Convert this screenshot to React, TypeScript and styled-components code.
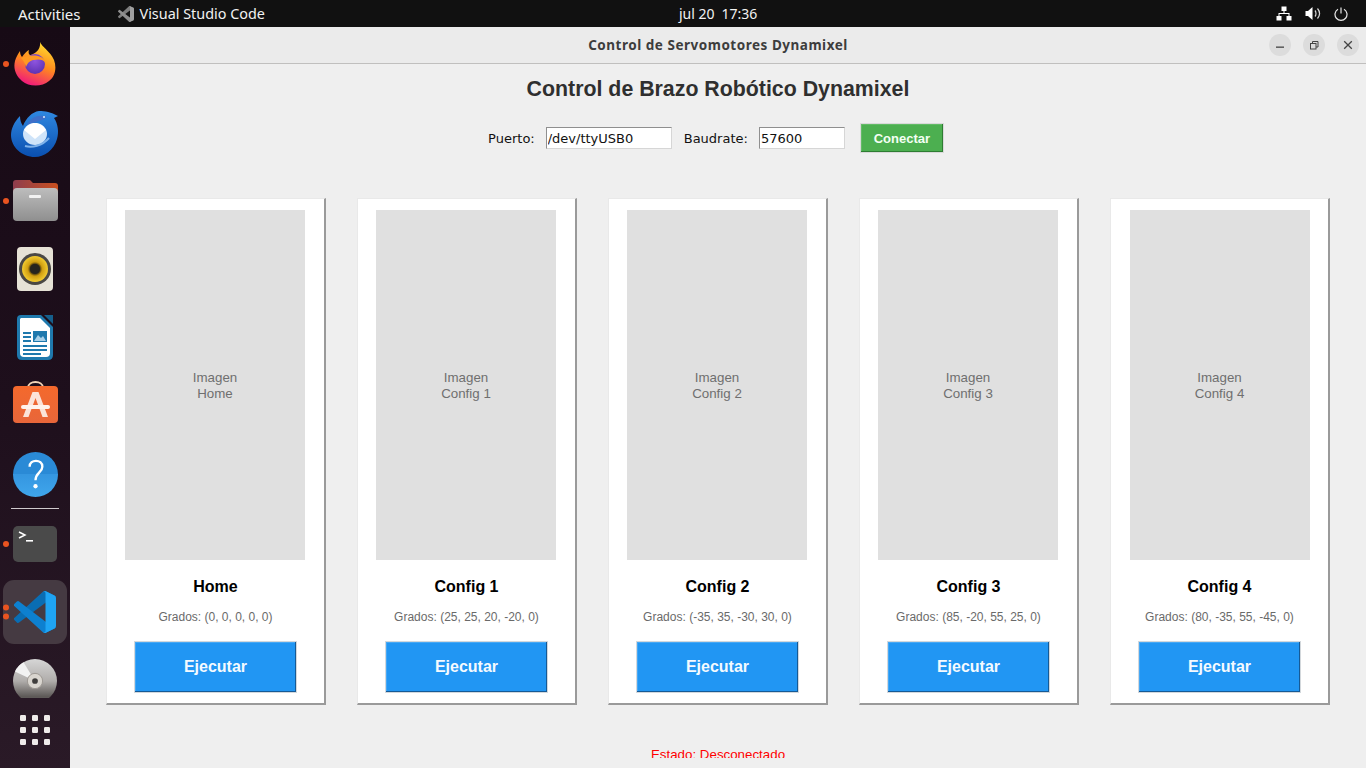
import styled, { createGlobalStyle } from "styled-components";

const GlobalStyle = createGlobalStyle`
	html, body {
		margin: 0;
		padding: 0;
		width: 1366px;
		height: 768px;
		overflow: hidden;
		background: #efefef;
	}
`;

const Screen = styled.div`
	width: 1366px;
	height: 768px;
	display: flex;
	flex-direction: column;
	overflow: hidden;
	font-family: "Liberation Sans", Arial, sans-serif;
`;

const TopBar = styled.div`
	height: 27px;
	flex: none;
	background: #111111;
	color: #f2f2f2;
	display: grid;
	grid-template-columns: 679px auto 1fr;
	align-items: center;
	font-family: "Noto Sans", sans-serif;
	font-size: 15px;
`;

const TopLeft = styled.div`
	display: flex;
	align-items: center;
	padding-left: 18px;
`;

const AppName = styled.div`
	display: flex;
	align-items: center;
	gap: 6px;
	margin-left: 37px;
	font-size: 14.4px;
`;

const Clock = styled.div`
	display: flex;
	gap: 7px;
	font-size: 14px;
`;

const TrayIcons = styled.div`
	display: flex;
	justify-content: flex-end;
	align-items: center;
	gap: 13px;
	padding-right: 18px;
`;

const Body = styled.div`
	flex: 1;
	display: flex;
	min-height: 0;
`;

const Dock = styled.div`
	width: 70px;
	flex: none;
	background: linear-gradient(180deg, #170a15 0%, #1e0f1c 50%, #2a1a27 100%);
	display: flex;
	flex-direction: column;
	align-items: center;
	padding: 5px 0 6px;
	box-sizing: border-box;
`;

const DockList = styled.div`
	flex: 1;
	min-height: 0;
	overflow: hidden;
	display: flex;
	flex-direction: column;
	align-items: center;
`;

const DockSlot = styled.div<{ $active?: boolean }>`
	position: relative;
	flex: none;
	width: 64px;
	height: 64px;
	margin-bottom: 4.4px;
	border-radius: 11px;
	display: flex;
	align-items: center;
	justify-content: center;
	background: ${(p) => (p.$active ? "#453a42" : "transparent")};
`;

const ShowApps = styled.div`
	flex: none;
	width: 64px;
	height: 64px;
	display: flex;
	align-items: center;
	justify-content: center;
`;

const RunDots = styled.div`
	position: absolute;
	left: 0;
	top: 50%;
	transform: translateY(-50%);
	display: flex;
	flex-direction: column;
	gap: 3px;
`;

const RunDot = styled.span`
	display: block;
	width: 6px;
	height: 6px;
	border-radius: 50%;
	background: #e95420;
`;

const DockSeparator = styled.div`
	flex: none;
	width: 48px;
	height: 1px;
	background: #cfcacd;
	margin: -3px 0 3px;
`;

const Window = styled.div`
	flex: 1;
	min-width: 0;
	display: flex;
	flex-direction: column;
	background: #efefef;
`;

const TitleBar = styled.div`
	height: 36px;
	flex: none;
	position: relative;
	display: flex;
	align-items: center;
	justify-content: center;
	background: #ebebeb;
	border-bottom: 1px solid #c0bfbe;
	font-family: "Noto Sans", sans-serif;
	font-weight: 700;
	font-size: 13.5px;
	letter-spacing: 0.52px;
	color: #3d3d3d;
`;

const WindowButtons = styled.div`
	position: absolute;
	right: 7px;
	top: 7px;
	display: flex;
	gap: 12px;
`;

const WindowButton = styled.div`
	width: 22px;
	height: 22px;
	border-radius: 50%;
	background: #dcdcdc;
	display: flex;
	align-items: center;
	justify-content: center;
`;

const Content = styled.div`
	flex: 1;
	min-height: 0;
	overflow: hidden;
	display: flex;
	flex-direction: column;
	align-items: center;
`;

const Heading = styled.h1`
	margin: 11px 0 0;
	font-size: 21.33px;
	line-height: 28px;
	font-weight: 700;
	color: #2f2f2f;
`;

const ConnectionRow = styled.div`
	display: flex;
	align-items: center;
	margin-top: 20px;
	height: 30px;
	font-family: "DejaVu Sans", sans-serif;
	font-size: 13px;
	color: #111111;
`;

const FieldLabel = styled.label`
	margin-right: 11px;
`;

const FieldInput = styled.input<{ $width: number }>`
	width: ${(p) => p.$width}px;
	height: 22px;
	box-sizing: border-box;
	margin-right: 12px;
	padding: 0 1px;
	background: #ffffff;
	border-style: solid;
	border-width: 1px;
	border-color: #8f8f8f #d6d6d6 #d6d6d6 #8f8f8f;
	font: inherit;
	color: #111111;
	outline: none;
`;

const ConnectButton = styled.button`
	margin-left: 3px;
	margin-right: 4px;
	width: 84px;
	height: 30px;
	box-sizing: border-box;
	background: #4caf50;
	color: #f4fff4;
	border: 1px solid #d9d9d9;
	box-shadow: inset -1px -1px 0 #2e7d32, inset 1px 1px 0 #62bb66;
	font-family: "Liberation Sans", Arial, sans-serif;
	font-weight: 700;
	font-size: 13px;
	padding: 0;
`;

const CardRow = styled.div`
	display: flex;
	gap: 31px;
	margin-top: 45px;
`;

const ImageHolder = styled.div`
	width: 180px;
	height: 350px;
	flex: none;
	box-sizing: border-box;
	margin-right: 1px;
	padding-top: 2px;
	background: #e0e0e0;
	color: #6f6f6f;
	display: flex;
	align-items: center;
	justify-content: center;
	text-align: center;
	font-size: 13.33px;
	line-height: 16px;
	white-space: pre-line;
`;

const Card = styled.div`
	width: 220px;
	height: 507px;
	box-sizing: border-box;
	background: #ffffff;
	border-style: solid;
	border-width: 1px 2px 2px 1px;
	border-color: #e9e9e9 #9a9a9a #9a9a9a #e9e9e9;
	display: flex;
	flex-direction: column;
	align-items: center;
	padding-top: 11px;

	&:last-child ${ImageHolder} {
		margin-right: 0;
	}
`;

const CardTitle = styled.div`
	margin-top: 18px;
	font-size: 16px;
	line-height: 18px;
	font-weight: 700;
	color: #000000;
`;

const Degrees = styled.div`
	margin-top: 13px;
	font-size: 12px;
	line-height: 16px;
	color: #6a6a6a;
`;

const RunButton = styled.button`
	margin-top: 16px;
	width: 163px;
	height: 52px;
	flex: none;
	box-sizing: border-box;
	background: #2196f3;
	color: #f4faff;
	border: 1px solid #d3d8dc;
	box-shadow: inset -1px -1px 0 #155a96, inset 1px 1px 0 #46a8f5;
	font-family: "Liberation Sans", Arial, sans-serif;
	font-weight: 700;
	font-size: 16px;
	padding: 0;
`;

const Status = styled.div`
	margin-top: 42px;
	height: 11px;
	overflow: hidden;
	font-size: 13.33px;
	line-height: 15px;
	color: #ff0000;
`;

const configs = [
	{ name: "Home", degrees: "(0, 0, 0, 0, 0)" },
	{ name: "Config 1", degrees: "(25, 25, 20, -20, 0)" },
	{ name: "Config 2", degrees: "(-35, 35, -30, 30, 0)" },
	{ name: "Config 3", degrees: "(85, -20, 55, 25, 0)" },
	{ name: "Config 4", degrees: "(80, -35, 55, -45, 0)" },
];

const vsLower = "M96.46 10.8 75.86.87a6.23 6.23 0 0 0-7.1 1.21L1.3 63.56a4.16 4.16 0 0 0 0 6.16l5.51 5a4.16 4.16 0 0 0 5.32.24L93.38 14.3A4.13 4.13 0 0 1 100 17.58v-.24a6.25 6.25 0 0 0-3.54-6.54Z";
const vsUpper = "M96.46 89.2 75.86 99.13a6.23 6.23 0 0 1-7.1-1.21L1.3 36.44a4.16 4.16 0 0 1 0-6.16l5.51-5a4.16 4.16 0 0 1 5.32-.24l81.25 61.66A4.13 4.13 0 0 0 100 82.42v.24a6.25 6.25 0 0 1-3.54 6.54Z";
const vsFront = "M75.86 99.13a6.25 6.25 0 0 1-7.11-1.21c2.3 2.3 6.25.67 6.25-2.59V4.67c0-3.26-3.95-4.89-6.25-2.59a6.25 6.25 0 0 1 7.11-1.21l20.6 9.91A6.25 6.25 0 0 1 100 16.41v67.18a6.25 6.25 0 0 1-3.54 5.63Z";

function VsCodeMark({ size, mono }: { size: number; mono?: boolean }) {
	return (
		<svg width={size} height={size} viewBox="0 0 100 100">
			<path d={vsLower} fill={mono ? "#7d7d7d" : "#0a6db3"} />
			<path d={vsUpper} fill={mono ? "#8f8f8f" : "#0d80d0"} />
			<path d={vsFront} fill={mono ? "#a0a0a0" : "#1fa4f3"} />
		</svg>
	);
}

function FirefoxIcon() {
	return (
		<svg width="42" height="44" viewBox="0 0 42 44">
			<defs>
				<linearGradient id="ffBody" x1="0.75" y1="0" x2="0.35" y2="1">
					<stop offset="0" stopColor="#ffe030" />
					<stop offset="0.5" stopColor="#ff8a1e" />
					<stop offset="1" stopColor="#f0177d" />
				</linearGradient>
				<radialGradient id="ffGlobe" cx="0.5" cy="0.35" r="0.7">
					<stop offset="0" stopColor="#8f55e0" />
					<stop offset="1" stopColor="#5a2fb0" />
				</radialGradient>
			</defs>
			<path
				d="M26 0 C28 5 36 9 40 18 C43 26 41 35 35 39 C28 45 15 45 8 39 C2 34 -1 27 1 19 C2 15 4 12 6 9 C6 12 7 14 8 15 C10 12 13 9 15 8 C14 11 15 13 17 13 C22 11 27 7 26 0 Z"
				fill="url(#ffBody)"
			/>
			<circle cx="21" cy="22" r="10" fill="url(#ffGlobe)" />
			<path
				d="M7 16 C12 14 17 13 24 14 C28 15 31 17 32 21 C29 17 24 17 20 18 C17 18 14 20 12 25 C11 21 9 18 7 16 Z"
				fill="#ff9a22"
			/>
		</svg>
	);
}

function ThunderbirdIcon() {
	return (
		<svg width="48" height="50" viewBox="0 -4 48 50">
			<defs>
				<linearGradient id="tbBody" x1="0" y1="0" x2="0" y2="1">
					<stop offset="0" stopColor="#2f88e0" />
					<stop offset="1" stopColor="#0a4fb0" />
				</linearGradient>
			</defs>
			<path
				d="M28 0 C34 0 40 1 47 5 L43 7 C47 13 48 21 46 28 C43 39 33 46 24 46 C11 46 0 36 0 24 C0 18 3 11 9 5 C9 9 10 12 12 15 C15 7 21 1 28 0 Z"
				fill="url(#tbBody)"
			/>
			<path d="M16 14 C20 6 29 3 36 6 C33 9 27 10 22 12 Z" fill="#3f6fc8" />
			<ellipse cx="24" cy="23" rx="12" ry="11" fill="#cfe4f9" />
			<path d="M13 19 L24 28 L35 19 C32 14 28 12 24 12 C20 12 16 14 13 19 Z" fill="#ffffff" />
			<path d="M14 35 C21 37 31 35 38 27" stroke="#7fb2ea" strokeWidth="2" fill="none" />
			<circle cx="33" cy="6" r="1" fill="#dcecfb" />
		</svg>
	);
}

function FilesIcon() {
	return (
		<svg width="45" height="41" viewBox="0 0 45 41">
			<defs>
				<linearGradient id="folderBack" x1="0" y1="0" x2="1" y2="0">
					<stop offset="0" stopColor="#8e3d4e" />
					<stop offset="1" stopColor="#c8501f" />
				</linearGradient>
				<linearGradient id="folderFront" x1="0" y1="0" x2="0" y2="1">
					<stop offset="0" stopColor="#bdbdbd" />
					<stop offset="1" stopColor="#8f8f8f" />
				</linearGradient>
			</defs>
			<path d="M0 10 V3 Q0 0 3 0 H17 L20 3 H42 Q45 3 45 6 V14 H0 Z" fill="url(#folderBack)" />
			<rect x="0" y="8" width="45" height="33" rx="4" fill="url(#folderFront)" />
			<rect x="16" y="15" width="12" height="3" rx="1" fill="#f2f2f2" />
		</svg>
	);
}

function RhythmboxIcon() {
	return (
		<svg width="36" height="44" viewBox="0 0 36 44">
			<defs>
				<radialGradient id="cone" cx="0.5" cy="0.5" r="0.5">
					<stop offset="0.38" stopColor="#4a3a10" />
					<stop offset="0.55" stopColor="#cf9d10" />
					<stop offset="1" stopColor="#f2cb30" />
				</radialGradient>
			</defs>
			<rect width="36" height="44" rx="4" fill="#e6e2d6" />
			<circle cx="18" cy="22" r="16" fill="#4a4844" />
			<circle cx="18" cy="22" r="13" fill="url(#cone)" />
			<circle cx="18" cy="22" r="5" fill="#26241f" />
		</svg>
	);
}

function WriterIcon() {
	return (
		<svg width="36" height="45" viewBox="0 0 36 45">
			<path d="M4 0 H24 L36 12 V40 Q36 45 31 45 H5 Q0 45 0 40 V4 Q0 0 4 0 Z" fill="#1f79ad" />
			<path d="M4 3 H23 L33 13 V38 Q33 42 29 42 H7 Q3 42 3 38 V4 Z" fill="#ffffff" />
			<path d="M27 0 H36 V9 Z" fill="#155f8c" />
			<rect x="6" y="17" width="8" height="2" fill="#1f79ad" />
			<rect x="6" y="21" width="8" height="2" fill="#1f79ad" />
			<rect x="6" y="25" width="8" height="2" fill="#1f79ad" />
			<rect x="16" y="16" width="14" height="11" fill="#1f79ad" />
			<path d="M17 26 L21 20 L24 23 L26 21 L29 26 Z" fill="#a8d0e8" />
			<rect x="6" y="30" width="24" height="2" fill="#1f79ad" />
			<rect x="6" y="34" width="24" height="2" fill="#1f79ad" />
			<rect x="6" y="38" width="18" height="2" fill="#1f79ad" />
		</svg>
	);
}

function AppCenterIcon() {
	return (
		<svg width="45" height="51" viewBox="0 0 45 51">
			<defs>
				<linearGradient id="bag" x1="0" y1="0" x2="0" y2="1">
					<stop offset="0" stopColor="#f4692c" />
					<stop offset="1" stopColor="#e8663a" />
				</linearGradient>
			</defs>
			<path d="M15 8 C15 0 30 0 30 8" stroke="#f2d5b8" strokeWidth="2" fill="none" />
			<rect x="0" y="6" width="45" height="37" rx="4" fill="url(#bag)" />
			<path d="M19.5 12 H25.5 L35 37 H29.5 L22.5 18 L15.5 37 H10 Z" fill="#fbe3d8" />
			<rect x="8" y="25" width="29" height="4" rx="2" fill="#fff3ec" />
		</svg>
	);
}

function HelpIcon() {
	return (
		<svg width="45" height="45" viewBox="0 0 46 46">
			<defs>
				<linearGradient id="helpBall" x1="0" y1="0" x2="0" y2="1">
					<stop offset="0" stopColor="#2a8ad6" />
					<stop offset="0.5" stopColor="#2a8ad6" />
					<stop offset="0.5" stopColor="#3596e0" />
					<stop offset="1" stopColor="#3fa6ec" />
				</linearGradient>
			</defs>
			<circle cx="23" cy="23" r="23" fill="url(#helpBall)" />
			<path d="M17 15 C17 7 30 7 30 15 C30 21 23 21 23 29" stroke="#ffffff" strokeWidth="2.4" fill="none" />
			<circle cx="23" cy="35" r="2.2" fill="#ffffff" />
		</svg>
	);
}

function TerminalIcon() {
	return (
		<svg width="44" height="36" viewBox="0 0 44 36">
			<rect width="44" height="36" rx="5" fill="#4a4a4a" />
			<path d="M6 6 L12 9 L6 12" stroke="#ffffff" strokeWidth="1.5" fill="none" />
			<rect x="13" y="14" width="7" height="1.6" fill="#ffffff" />
		</svg>
	);
}

function DiscIcon() {
	return (
		<svg width="44" height="44" viewBox="0 0 46 46">
			<defs>
				<linearGradient id="disc" x1="0" y1="0" x2="0" y2="1">
					<stop offset="0" stopColor="#d6d6d6" />
					<stop offset="0.5" stopColor="#b0adab" />
					<stop offset="0.85" stopColor="#5e5a58" />
				</linearGradient>
			</defs>
			<circle cx="23" cy="23" r="23" fill="url(#disc)" />
			<path d="M23 23 L2 13 A23 23 0 0 1 11 3.5 Z" fill="#f2f2f2" />
			<circle cx="23" cy="23" r="8" fill="#d9d5cf" stroke="#9a9590" />
			<circle cx="23" cy="23" r="3" fill="#3f3d3c" />
		</svg>
	);
}

function GridIcon() {
	return (
		<svg width="32" height="32" viewBox="0 0 32 32" fill="#efebea">
			{[0, 12, 24].map((y) =>
				[0, 12, 24].map((x) => <rect key={`${x}-${y}`} x={x + 1} y={y + 1} width="6" height="6" rx="1.2" />)
			)}
		</svg>
	);
}

function NetworkIcon() {
	return (
		<svg width="16" height="15" viewBox="0 0 16 15" fill="#ffffff">
			<rect x="5.5" y="0.5" width="5" height="4.5" />
			<rect x="0.5" y="10" width="5" height="4.5" />
			<rect x="10.5" y="10" width="5" height="4.5" />
			<path d="M7.5 5 H8.5 V7 H13.5 V10 H12.5 V8 H3.5 V10 H2.5 V7 H7.5 Z" />
		</svg>
	);
}

function SpeakerIcon() {
	return (
		<svg width="16" height="15" viewBox="0 0 16 15" fill="none">
			<path d="M0.5 5 H3 L7.5 1 V14 L3 10 H0.5 Z" fill="#ffffff" />
			<path d="M10 4.5 C11.3 6 11.3 9 10 10.5" stroke="#d8d8d8" strokeWidth="1.2" />
			<path d="M12.5 2.5 C15 5.5 15 9.5 12.5 12.5" stroke="#d8d8d8" strokeWidth="1.2" />
		</svg>
	);
}

function PowerIcon() {
	return (
		<svg width="14" height="14" viewBox="0 0 14 14" fill="none" stroke="#e8e8e8" strokeWidth="1.2">
			<path d="M4 2.2 A6 6 0 1 0 10 2.2" />
			<path d="M7 0.5 V6.5" />
		</svg>
	);
}

function MinimizeGlyph() {
	return (
		<svg width="10" height="10" viewBox="0 0 10 10">
			<rect x="1" y="6.5" width="8" height="1.3" fill="#444444" />
		</svg>
	);
}

function RestoreGlyph() {
	return (
		<svg width="10" height="10" viewBox="0 0 10 10" fill="none" stroke="#444444" strokeWidth="1">
			<rect x="1.5" y="3.5" width="5.5" height="5.5" />
			<path d="M3.5 3.5 V1.5 H9 V7 H7" />
		</svg>
	);
}

function CloseGlyph() {
	return (
		<svg width="10" height="10" viewBox="0 0 10 10" stroke="#444444" strokeWidth="1.3">
			<path d="M1.2 1.2 L8.8 8.8 M8.8 1.2 L1.2 8.8" />
		</svg>
	);
}

export default function App() {
	return (
		<Screen>
			<GlobalStyle />
			<TopBar>
				<TopLeft>
					Activities
					<AppName>
						<VsCodeMark size={16} mono />
						Visual Studio Code
					</AppName>
				</TopLeft>
				<Clock>
					<span>jul 20</span>
					<span>17:36</span>
				</Clock>
				<TrayIcons>
					<NetworkIcon />
					<SpeakerIcon />
					<PowerIcon />
				</TrayIcons>
			</TopBar>
			<Body>
				<Dock>
					<DockList>
						<DockSlot>
							<RunDots><RunDot /></RunDots>
							<FirefoxIcon />
						</DockSlot>
						<DockSlot><ThunderbirdIcon /></DockSlot>
						<DockSlot>
							<RunDots><RunDot /></RunDots>
							<FilesIcon />
						</DockSlot>
						<DockSlot><RhythmboxIcon /></DockSlot>
						<DockSlot><WriterIcon /></DockSlot>
						<DockSlot><AppCenterIcon /></DockSlot>
						<DockSlot><HelpIcon /></DockSlot>
						<DockSeparator />
						<DockSlot>
							<RunDots><RunDot /></RunDots>
							<TerminalIcon />
						</DockSlot>
						<DockSlot $active>
							<RunDots><RunDot /><RunDot /></RunDots>
							<VsCodeMark size={42} />
						</DockSlot>
						<DockSlot><DiscIcon /></DockSlot>
					</DockList>
					<ShowApps><GridIcon /></ShowApps>
				</Dock>
				<Window>
					<TitleBar>
						Control de Servomotores Dynamixel
						<WindowButtons>
							<WindowButton><MinimizeGlyph /></WindowButton>
							<WindowButton><RestoreGlyph /></WindowButton>
							<WindowButton><CloseGlyph /></WindowButton>
						</WindowButtons>
					</TitleBar>
					<Content>
						<Heading>Control de Brazo Robótico Dynamixel</Heading>
						<ConnectionRow>
							<FieldLabel>Puerto:</FieldLabel>
							<FieldInput $width={126} defaultValue="/dev/ttyUSB0" />
							<FieldLabel>Baudrate:</FieldLabel>
							<FieldInput $width={86} defaultValue="57600" />
							<ConnectButton>Conectar</ConnectButton>
						</ConnectionRow>
						<CardRow>
							{configs.map((c) => (
								<Card key={c.name}>
									<ImageHolder>{`Imagen\n${c.name}`}</ImageHolder>
									<CardTitle>{c.name}</CardTitle>
									<Degrees>Grados: {c.degrees}</Degrees>
									<RunButton>Ejecutar</RunButton>
								</Card>
							))}
						</CardRow>
						<Status>Estado: Desconectado</Status>
					</Content>
				</Window>
			</Body>
		</Screen>
	);
}
